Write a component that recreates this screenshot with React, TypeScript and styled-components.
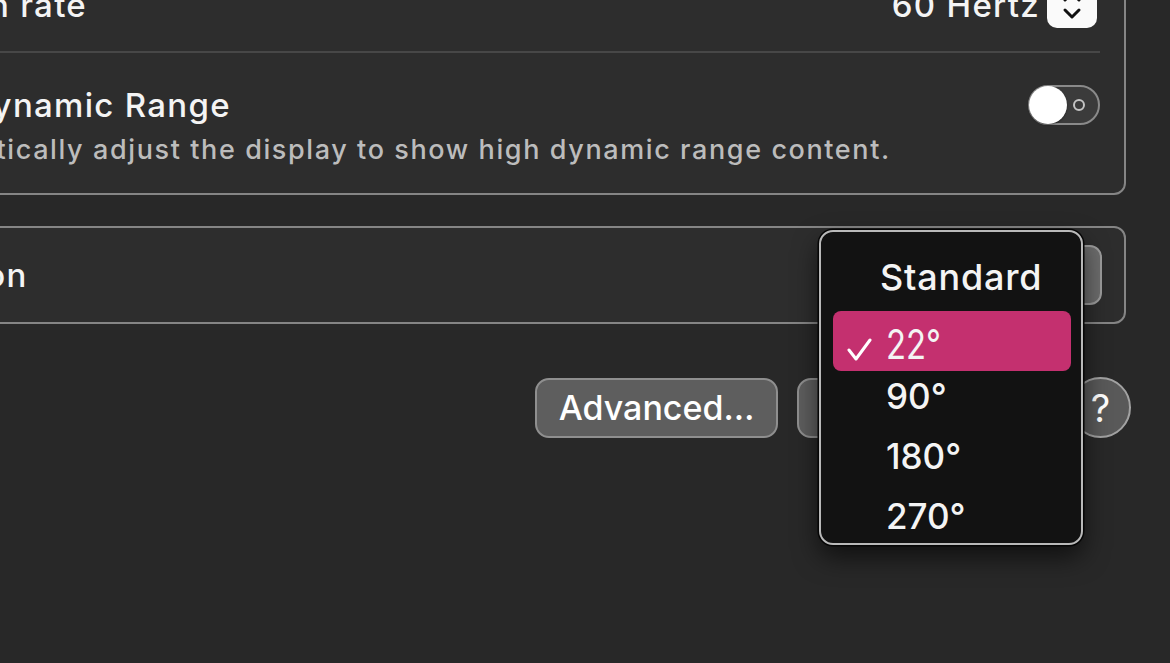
import React from "react";
import styled, { createGlobalStyle } from "styled-components";

const Global = createGlobalStyle`
  html, body { margin: 0; padding: 0; background: #282828; overflow: hidden; }
  body { font-family: Inter, "Noto Sans", sans-serif; color: #f2f2f2; }
  * { box-sizing: border-box; }
`;

const Viewport = styled.div`
  position: relative;
  width: 1170px;
  height: 663px;
  overflow: hidden;
  background: #282828;
`;

const Canvas = styled.div`
  display: flex;
  flex-direction: column;
  width: 1274px;
  margin-left: -148px;
  margin-top: -44px;
`;

const Card = styled.section<{ $mt?: number }>`
  display: flex;
  flex-direction: column;
  margin-top: ${(p) => p.$mt ?? 0}px;
  background: #2d2d2d;
  border: 2px solid #858585;
  border-radius: 12px;
`;

const Row = styled.div<{ $h: number; $align?: string; $pt?: number; $pr?: number }>`
  display: flex;
  align-items: ${(p) => p.$align ?? "center"};
  justify-content: space-between;
  height: ${(p) => p.$h}px;
  padding: ${(p) => p.$pt ?? 0}px ${(p) => p.$pr ?? 24}px 0 25px;
`;

const Label = styled.span<{ $indent?: number }>`
  font-size: 33px;
  font-weight: 500;
  letter-spacing: 1.3px;
  color: #f4f4f4;
  line-height: 40px;
  white-space: nowrap;
  margin-left: ${(p) => p.$indent ?? 0}px;
`;

const ValueGroup = styled.div`
  display: flex;
  align-items: center;
  gap: 7px;
  margin-right: 3px;
`;

const Stepper = styled.div`
  width: 50px;
  height: 46px;
  border-radius: 10px;
  background: #fafafa;
  display: flex;
  align-items: center;
  justify-content: center;
`;

const Divider = styled.div`
  height: 2px;
  background: #474747;
  margin: 0 24px 0 25px;
`;

const TextStack = styled.div`
  display: flex;
  flex-direction: column;
  gap: 8px;
`;

const Sub = styled.span`
  font-size: 27px;
  font-weight: 500;
  letter-spacing: 1.6px;
  line-height: 34px;
  color: #bcbcbc;
  white-space: nowrap;
  margin-left: 8px;
`;

const Toggle = styled.div`
  width: 72px;
  height: 40px;
  border-radius: 20px;
  border: 2px solid #8a8a8a;
  background: #3b3b3b;
  display: flex;
  align-items: center;
`;

const Knob = styled.div`
  width: 38px;
  height: 38px;
  border-radius: 50%;
  background: #ffffff;
  margin-left: -1px;
  box-shadow: 0 1px 2px rgba(0, 0, 0, 0.4);
`;

const Ring = styled.div`
  width: 12px;
  height: 12px;
  border-radius: 50%;
  border: 2px solid #c4c4c4;
  margin-left: auto;
  margin-right: 13px;
`;

const PopupButton = styled.div`
  height: 60px;
  width: 220px;
  border-radius: 12px;
  border: 2px solid #9c9c9c;
  background: #6c6c6c;
  display: flex;
  align-items: center;
  padding-left: 24px;
  font-size: 33px;
  font-weight: 500;
  color: #fff;
`;

const ButtonRow = styled.div`
  display: flex;
  justify-content: flex-end;
  align-items: center;
  gap: 19px;
  margin-top: 53px;
  margin-right: -5px;
`;

const PushButton = styled.button`
  height: 60px;
  padding: 0 22px;
  border-radius: 14px;
  border: 2px solid #8f8f8f;
  background: #5e5e5e;
  color: #ffffff;
  font-family: Inter, "Noto Sans", sans-serif;
  font-size: 34px;
  font-weight: 500;
  letter-spacing: 0;
  display: flex;
  align-items: center;
  white-space: nowrap;
`;

const HelpButton = styled.button`
  width: 61px;
  height: 61px;
  border-radius: 50%;
  border: 2px solid #a2a2a2;
  background: #595959;
  color: #ffffff;
  font-family: Inter, "Noto Sans", sans-serif;
  font-size: 38px;
  font-weight: 400;
  display: flex;
  align-items: center;
  justify-content: center;
  padding: 0;
  margin-left: 4px;
`;

const Menu = styled.div`
  position: absolute;
  left: 819px;
  top: 230px;
  width: 264px;
  height: 315px;
  overflow: hidden;
  background: #121212;
  border: 2px solid #b9b9b9;
  border-radius: 14px;
  box-shadow: 0 0 0 1.5px #050505, 0 12px 26px rgba(0, 0, 0, 0.6);
  padding: 15px 10px 0 12px;
  display: flex;
  flex-direction: column;
`;

const MenuItem = styled.div<{ $selected?: boolean; $lead?: number }>`
  position: relative;
  height: 60px;
  flex-shrink: 0;
  display: flex;
  align-items: center;
  padding-left: ${(p) => p.$lead ?? 53}px;
  border-radius: 8px;
  font-size: 35px;
  font-weight: 500;
  color: #f4f4f4;
  background: ${(p) => (p.$selected ? "#c4306f" : "transparent")};
  margin-top: ${(p) => (p.$selected ? 4 : 0)}px;
  margin-bottom: ${(p) => (p.$selected ? -5 : 0)}px;
`;

const StandardText = styled.span`
  font-size: 36px;
  letter-spacing: 0.8px;
`;

const SelectedText = styled.span`
  display: inline-block;
  font-size: 41px;
  font-weight: 400;
  transform: scaleX(0.8);
  transform-origin: left center;
  padding-top: 6px;
`;

const CheckMark = styled.svg`
  position: absolute;
  left: 14px;
  top: 27px;
`;

const Chevrons = () => (
  <svg width="20" height="30" viewBox="0 0 20 30">
    <polyline points="3,10 10,3 17,10" fill="none" stroke="#111" strokeWidth="3" strokeLinecap="round" strokeLinejoin="round" />
    <polyline points="3,20 10,27 17,20" fill="none" stroke="#111" strokeWidth="3" strokeLinecap="round" strokeLinejoin="round" />
  </svg>
);

export default function App() {
  return (
    <Viewport>
      <Global />
      <Canvas>
        <Card>
          <Row $h={93}>
            <Label>Refresh rate</Label>
            <ValueGroup>
              <Label>60 Hertz</Label>
              <Stepper>
                <Chevrons />
              </Stepper>
            </ValueGroup>
          </Row>
          <Divider />
          <Row $h={140} $align="flex-start" $pt={32}>
            <TextStack>
              <Label>High Dynamic Range</Label>
              <Sub>Automatically adjust the display to show high dynamic range content.</Sub>
            </TextStack>
            <Toggle>
              <Knob />
              <Ring />
            </Toggle>
          </Row>
        </Card>
        <Card $mt={31}>
          <Row $h={94} $pr={22}>
            <Label $indent={8}>Rotation</Label>
            <PopupButton>Standard</PopupButton>
          </Row>
        </Card>
        <ButtonRow>
          <PushButton>Advanced…</PushButton>
          <PushButton>Night Shift…</PushButton>
          <HelpButton>?</HelpButton>
        </ButtonRow>
      </Canvas>
      <Menu>
        <MenuItem $lead={47}>
          <StandardText>Standard</StandardText>
        </MenuItem>
        <MenuItem $selected>
          <CheckMark width="26" height="24" viewBox="0 0 26 24">
            <polyline points="2,12 9,21 23,2" fill="none" stroke="#fff" strokeWidth="3" strokeLinecap="round" strokeLinejoin="round" />
          </CheckMark>
          <SelectedText>22°</SelectedText>
        </MenuItem>
        <MenuItem>90°</MenuItem>
        <MenuItem>180°</MenuItem>
        <MenuItem>270°</MenuItem>
      </Menu>
    </Viewport>
  );
}
